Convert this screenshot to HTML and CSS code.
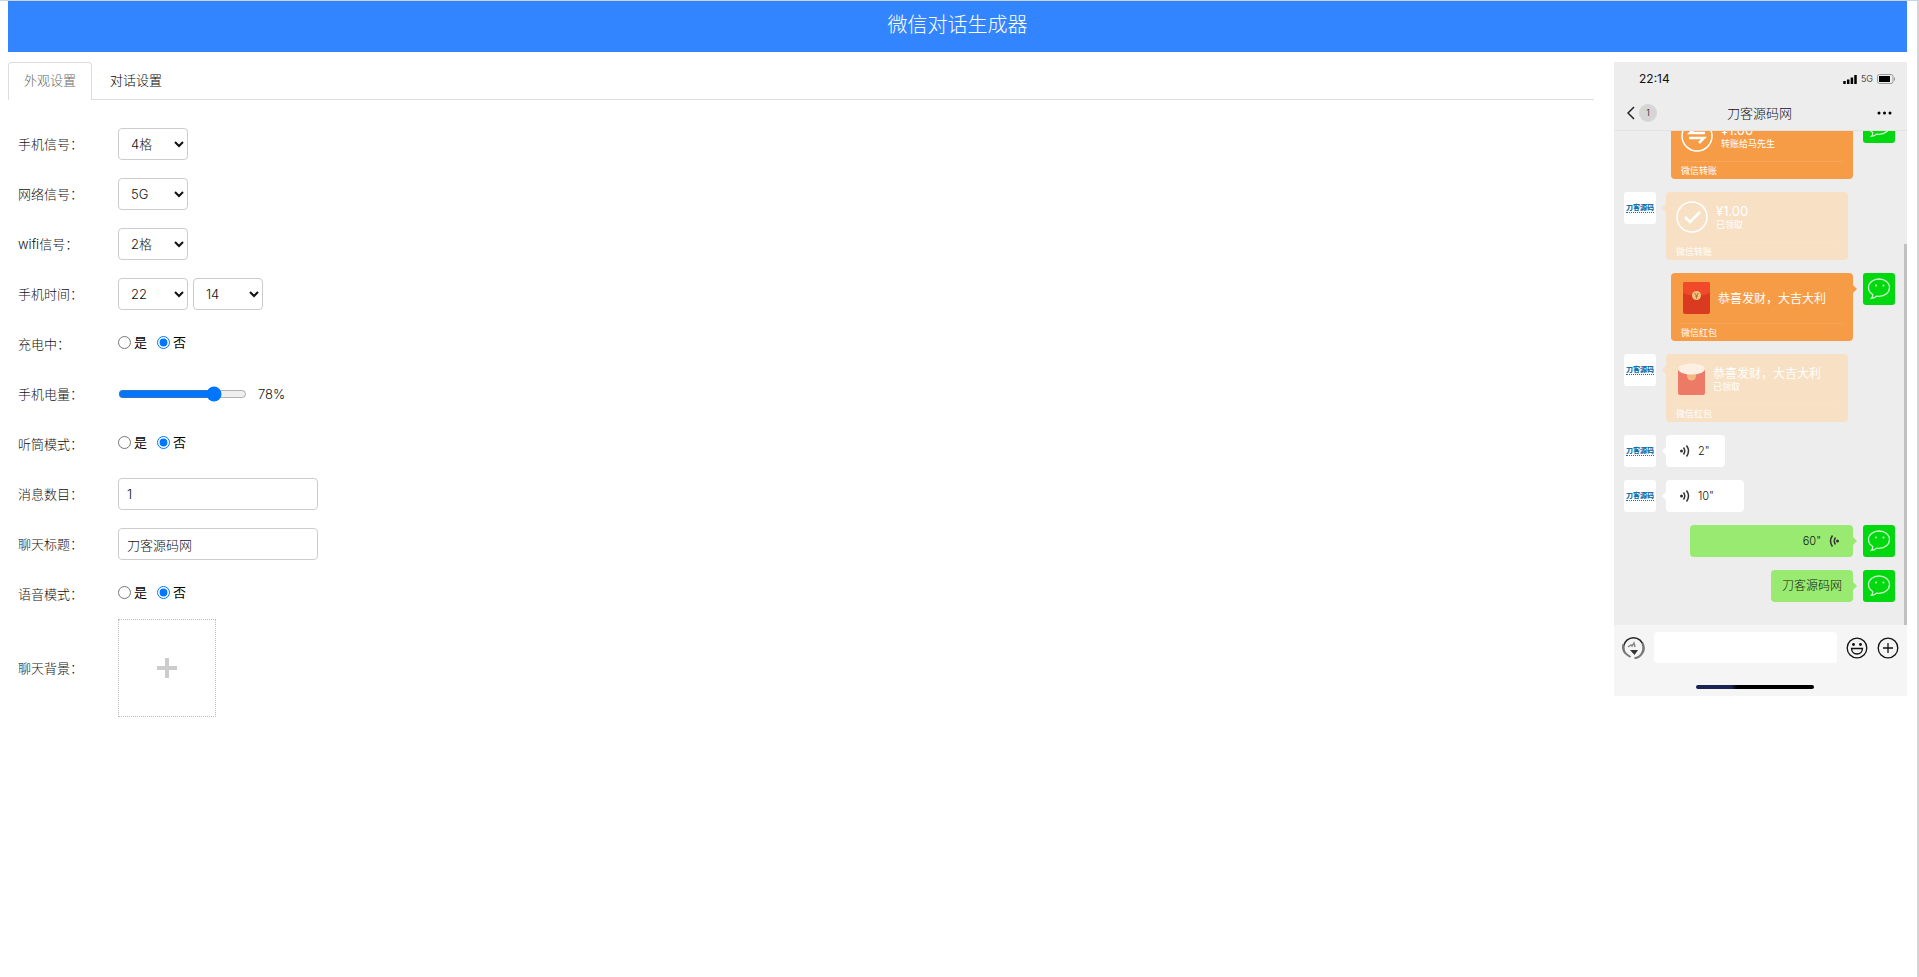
FILE: index.html
```html
<!DOCTYPE html>
<html lang="zh-CN">
<head>
  <meta charset="UTF-8">
  <meta name="viewport" content="width=device-width, initial-scale=1.0">
  <title>微信对话生成器</title>
  <link rel="stylesheet" href="styles.css">
</head>
<body>
  <svg class="symbols" aria-hidden="true">
    <symbol id="icon-wechat" viewBox="0 0 32 32">
      <path d="M16 6C9.900 6 5.500 9.700 5.500 14.600c0 3 1.600 5.400 4.200 6.900.2 1.400-.3 2.800-1.300 3.900 2.100-.2 3.900-1 5.200-2.300.8.100 1.600.2 2.400.2 6.100 0 10.500-3.800 10.500-8.700S22.100 6 16 6z" fill="none" stroke="#cdfccd" stroke-width="1.300"/>
      <circle cx="13" cy="12.500" r="1" fill="#cdfccd"/>
      <circle cx="20.500" cy="12.500" r="1" fill="#cdfccd"/>
    </symbol>
    <symbol id="icon-voice" viewBox="0 0 12 14">
      <circle cx="2.500" cy="7" r="1.500" fill="#333"/>
      <path d="M4.500 3.500q2.500 3.500 0 7M7.500 1.500q4 5.500 0 11" fill="none" stroke="#333" stroke-width="1.500"/>
    </symbol>
  </svg>

  <header class="header">
    <h1>微信对话生成器</h1>
  </header>

  <main class="main">
    <section class="settings">
      <div class="tabs">
        <button type="button" class="tab active">外观设置</button>
        <button type="button" class="tab">对话设置</button>
      </div>

      <form class="form">
        <div class="row">
          <label class="label" for="signal">手机信号：</label>
          <select id="signal" class="control select"><option>4格</option></select>
        </div>
        <div class="row">
          <label class="label" for="network">网络信号：</label>
          <select id="network" class="control select"><option>5G</option></select>
        </div>
        <div class="row">
          <label class="label" for="wifi">wifi信号：</label>
          <select id="wifi" class="control select"><option>2格</option></select>
        </div>
        <div class="row">
          <label class="label" for="hour">手机时间：</label>
          <div class="time">
            <select id="hour" class="control select"><option>22</option></select>
            <select class="control select" aria-label="分钟"><option>14</option></select>
          </div>
        </div>
        <div class="row">
          <span class="label">充电中：</span>
          <div class="radios">
            <label><input type="radio" name="charging">是</label>
            <label><input type="radio" name="charging" checked>否</label>
          </div>
        </div>
        <div class="row">
          <label class="label" for="battery">手机电量：</label>
          <input type="range" id="battery" class="range" min="0" max="100" value="78">
          <output for="battery">78%</output>
        </div>
        <div class="row">
          <span class="label">听筒模式：</span>
          <div class="radios">
            <label><input type="radio" name="earpiece">是</label>
            <label><input type="radio" name="earpiece" checked>否</label>
          </div>
        </div>
        <div class="row">
          <label class="label" for="count">消息数目：</label>
          <input type="text" id="count" class="control text" value="1">
        </div>
        <div class="row">
          <label class="label" for="title">聊天标题：</label>
          <input type="text" id="title" class="control text" value="刀客源码网">
        </div>
        <div class="row">
          <span class="label">语音模式：</span>
          <div class="radios">
            <label><input type="radio" name="voice">是</label>
            <label><input type="radio" name="voice" checked>否</label>
          </div>
        </div>
        <div class="row row-upload">
          <span class="label">聊天背景：</span>
          <button type="button" class="upload" aria-label="上传背景">
            <svg width="20" height="20" viewBox="0 0 20 20"><path d="M10 0v20M0 10h20" stroke="#ccc" stroke-width="4"/></svg>
          </button>
        </div>
      </form>
    </section>

    <aside class="phone">
      <div class="phone-top">
        <div class="status">
          <span class="clock">22:14</span>
          <span class="status-icons">
            <svg width="14" height="9" viewBox="0 0 14 9"><path d="M1.500 6v3M5.200 4.500V9M8.900 2.500V9M12.500 0v9" stroke="#000" stroke-width="2.500"/></svg>
            <span>5G</span>
            <svg width="19" height="10" viewBox="0 0 19 10">
              <rect x=".5" y=".5" width="15.500" height="9" rx="2" fill="none" stroke="#999"/>
              <rect x="2" y="2" width="11" height="6" fill="#000"/>
              <path d="M17.500 3.500v3" stroke="#999"/>
            </svg>
          </span>
        </div>
        <div class="nav">
          <button type="button" class="back" aria-label="返回">
            <svg width="8" height="14" viewBox="0 0 8 14"><path d="M7 1L1 7l6 6" fill="none" stroke="#222" stroke-width="1.500"/></svg>
            <span class="badge">1</span>
          </button>
          <h2>刀客源码网</h2>
          <button type="button" class="more" aria-label="更多">
            <svg width="15" height="4" viewBox="0 0 15 4"><circle cx="2" cy="2" r="1.500"/><circle cx="7.500" cy="2" r="1.500"/><circle cx="13" cy="2" r="1.500"/></svg>
          </button>
        </div>
      </div>

      <div class="chat">
        <div class="msg me">
          <div class="card">
            <div class="card-body">
              <svg width="32" height="32" viewBox="0 0 32 32" fill="none" stroke="#fff">
                <circle cx="16" cy="16" r="15" stroke-width="1.500"/>
                <path d="M24 13H9l5-5M8 18h15l-5 5" stroke-width="2.500"/>
              </svg>
              <div class="card-text"><strong>¥1.00</strong><small>转账给马先生</small></div>
            </div>
            <div class="card-foot">微信转账</div>
          </div>
          <span class="avatar wechat"><svg width="32" height="32"><use href="#icon-wechat"/></svg></span>
        </div>

        <div class="msg">
          <span class="avatar"><b>刀客源码</b><i></i></span>
          <div class="card received">
            <div class="card-body">
              <svg width="32" height="32" viewBox="0 0 32 32" fill="none" stroke="#fff">
                <circle cx="16" cy="16" r="15" stroke-width="1.500"/>
                <path d="M9 16l5 5 10-10" stroke-width="2.500"/>
              </svg>
              <div class="card-text"><strong>¥1.00</strong><small>已领取</small></div>
            </div>
            <div class="card-foot">微信转账</div>
          </div>
        </div>

        <div class="msg me">
          <div class="card packet">
            <div class="card-body">
              <svg width="27" height="32" viewBox="0 0 27 32">
                <rect width="27" height="32" rx="2" fill="#d93a20"/>
                <path d="M0 11V2q0-2 2-2h23q2 0 2 2v9q-13.500 6-27 0z" fill="#f14a2b"/>
                <circle cx="13.500" cy="13.500" r="4.500" fill="#f0c27b"/>
                <path d="M11.500 11l2 2.500 2-2.500M13.500 13.500v3M12 14h3" fill="none" stroke="#b5702c"/>
              </svg>
              <div class="card-text"><span>恭喜发财，大吉大利</span></div>
            </div>
            <div class="card-foot">微信红包</div>
          </div>
          <span class="avatar wechat"><svg width="32" height="32"><use href="#icon-wechat"/></svg></span>
        </div>

        <div class="msg">
          <span class="avatar"><b>刀客源码</b><i></i></span>
          <div class="card packet received">
            <div class="card-body">
              <svg width="27" height="32" viewBox="0 0 27 32">
                <rect y="5" width="27" height="27" rx="2" fill="#ec7a66"/>
                <circle cx="13.500" cy="13" r="4.500" fill="#f2b981"/>
                <ellipse cx="13.500" cy="6" rx="13.500" ry="5.500" fill="#fdf0e2"/>
              </svg>
              <div class="card-text"><span>恭喜发财，大吉大利</span><small>已领取</small></div>
            </div>
            <div class="card-foot">微信红包</div>
          </div>
        </div>

        <div class="msg">
          <span class="avatar"><b>刀客源码</b><i></i></span>
          <div class="bubble voice voice-short"><svg width="12" height="14"><use href="#icon-voice"/></svg>2"</div>
        </div>
        <div class="msg">
          <span class="avatar"><b>刀客源码</b><i></i></span>
          <div class="bubble voice voice-medium"><svg width="12" height="14"><use href="#icon-voice"/></svg>10"</div>
        </div>
        <div class="msg me">
          <div class="bubble voice voice-long">60"<svg class="flip" width="12" height="14"><use href="#icon-voice"/></svg></div>
          <span class="avatar wechat"><svg width="32" height="32"><use href="#icon-wechat"/></svg></span>
        </div>
        <div class="msg me">
          <div class="bubble">刀客源码网</div>
          <span class="avatar wechat"><svg width="32" height="32"><use href="#icon-wechat"/></svg></span>
        </div>
        <span class="scrollbar"></span>
      </div>

      <div class="phone-bottom">
        <div class="inputbar">
          <button type="button" aria-label="语音">
            <svg width="23" height="23" viewBox="0 0 23 23" fill="none" stroke="#222">
              <path d="M3 17A10 10 0 1 1 20 17" stroke-width="1.500"/>
              <path d="M1.500 8q-2 7 4 11l3 2M20.500 7q4 8-4 14l-4 1.500" stroke="#777" stroke-width="2"/>
              <path d="M6 11l3-2 1 1 2-3 1 4" stroke="#888" stroke-width="1.500"/>
              <path d="M8 14h8l-3.500 5z" fill="#333" stroke="none"/>
            </svg>
          </button>
          <input type="text" aria-label="消息">
          <button type="button" aria-label="表情">
            <svg width="22" height="22" viewBox="0 0 22 22" fill="none" stroke="#111" stroke-width="1.300">
              <circle cx="11" cy="11" r="9.800"/>
              <circle cx="7.500" cy="7.500" r=".8" fill="#111"/>
              <circle cx="14.500" cy="7.500" r=".8" fill="#111"/>
              <path d="M5.500 11.500h11q-.5 5.500-5.500 5.500t-5.500-5.500z"/>
            </svg>
          </button>
          <button type="button" aria-label="添加">
            <svg width="22" height="22" viewBox="0 0 22 22" fill="none" stroke="#111" stroke-width="1.300">
              <circle cx="11" cy="11" r="9.800"/>
              <path d="M11 6v10M6 11h10"/>
            </svg>
          </button>
        </div>
        <span class="home"></span>
      </div>
    </aside>
  </main>
</body>
</html>
```
FILE: styles.css
```css
* {
  box-sizing: border-box;
}

body {
  margin: 0;
  min-height: 100vh;
  padding: 0 10px 0 8px;
  border-top: 1px solid #c9d3e6;
  border-right: 2px solid #d5d5d5;
  background: #fff;
  color: #111;
  font-family: Inter, "Noto Sans CJK SC", sans-serif;
  font-size: 13px;
  font-weight: 300;
  line-height: 20px;
}

button,
input,
select {
  font: inherit;
  color: inherit;
}

button {
  padding: 0;
  border: 0;
  background: none;
  cursor: pointer;
}

svg {
  display: block;
  flex: none;
}

.symbols {
  position: absolute;
  width: 0;
  height: 0;
}

.header {
  padding: 10px 0 12px;
  background: #3385ff;
  color: #fff;
  text-align: center;
}

.header h1 {
  margin: 0;
  font-size: 20px;
  font-weight: 300;
  line-height: 29px;
}

.main {
  display: flex;
  align-items: flex-start;
  gap: 20px;
  padding-top: 10px;
}

/* settings */
.settings {
  flex: 1;
}

.tabs {
  display: flex;
  gap: 2px;
  border-bottom: 1px solid #ddd;
}

.tab {
  height: 37px;
  padding: 0 15px 2px;
  border: 1px solid transparent;
  border-bottom: 0;
  border-radius: 4px 4px 0 0;
  color: #000;
}

.tab.active {
  margin-bottom: -1px;
  height: 38px;
  padding-bottom: 3px;
  border-color: #ddd;
  background: #fff;
  color: #666;
}

.form {
  padding: 19px 10px;
}

.row {
  display: flex;
  align-items: center;
  min-height: 50px;
}

.row-upload {
  min-height: 98px;
}

.label {
  width: 100px;
}

.control {
  height: 32px;
  border: 1px solid #ccc;
  border-radius: 4px;
  background: #fff;
}

.select {
  width: 70px;
  padding: 0 0 0 8px;
}

.time {
  display: flex;
  gap: 5px;
}

.text {
  width: 200px;
  padding: 0 8px;
}

.radios {
  display: flex;
  gap: 10px;
  padding-bottom: 4px;
  color: #000;
  font-weight: 400;
}

.radios label {
  display: flex;
  align-items: center;
  gap: 3px;
}

.radios input {
  width: 13px;
  height: 13px;
  margin: 0;
}

.range {
  width: 129px;
  margin: 0 11px 0 0;
}

.upload {
  display: grid;
  place-items: center;
  width: 98px;
  height: 98px;
  border: 1px dotted #bbb;
}

/* phone preview */
.phone {
  width: 293px;
  background: #ededed;
}

.phone-top {
  border-bottom: 1px solid #e2e2e2;
}

.status {
  display: flex;
  align-items: center;
  justify-content: space-between;
  height: 34px;
  padding: 0 11px 0 25px;
}

.clock {
  font-size: 12px;
  font-weight: 400;
}

.status-icons {
  display: flex;
  align-items: center;
  gap: 4px;
  font-size: 9px;
}

.nav {
  display: grid;
  grid-template-columns: 1fr auto 1fr;
  align-items: center;
  height: 34px;
  padding: 0 15px 0 13px;
}

.nav h2 {
  margin: 0;
  font-size: 13px;
  font-weight: 300;
}

.back {
  display: flex;
  align-items: center;
  gap: 4px;
}

.badge {
  width: 18px;
  height: 18px;
  border-radius: 50%;
  background: #d5d5d5;
  font-size: 9px;
  line-height: 18px;
  text-align: center;
}

.more {
  justify-self: end;
}

.chat {
  position: relative;
  display: flex;
  flex-direction: column;
  justify-content: flex-end;
  gap: 13px;
  height: 494px;
  padding: 0 12px 23px 10px;
  overflow: hidden;
}

.scrollbar {
  position: absolute;
  right: 0;
  bottom: 0;
  width: 3px;
  height: 381px;
  background: #c1c1c1;
}

.msg {
  display: flex;
  align-items: flex-start;
  gap: 10px;
}

.msg.me {
  justify-content: flex-end;
}

.avatar {
  display: flex;
  flex: none;
  flex-direction: column;
  align-items: center;
  justify-content: center;
  width: 32px;
  height: 32px;
  border-radius: 3px;
  background: #fff;
  color: #1272b0;
  font-size: 7px;
  line-height: 9px;
}

.avatar b {
  font-weight: 900;
}

.avatar i {
  width: 28px;
  border-top: 1px dotted #1272b0;
}

.avatar.wechat {
  background: #02d80f;
}

.card,
.bubble {
  --bg: #fff;
  position: relative;
  border-radius: 4px;
  background: var(--bg);
}

/* little arrow beside the avatar */
.card::before,
.bubble::before {
  content: '';
  position: absolute;
  top: 12px;
  right: 100%;
  border: 4px solid transparent;
  border-left-width: 0;
  border-right-color: var(--bg);
}

.me .card::before,
.me .bubble::before {
  right: auto;
  left: 100%;
  border-width: 4px 0 4px 4px;
  border-left-color: var(--bg);
}

.card {
  --bg: #f79c46;
  width: 182px;
  height: 68px;
  padding: 9px 10px 0;
  color: #fff;
}

.card.received {
  --bg: #f8e0c4;
}

.card-body {
  display: flex;
  align-items: center;
  gap: 8px;
  height: 32px;
}

.packet .card-body {
  padding-left: 2px;
}

.card-text {
  display: flex;
  flex-direction: column;
  font-size: 12px;
  font-weight: 400;
  line-height: 15px;
}

.card-text strong {
  font-size: 13px;
  font-weight: 400;
}

.card-text small {
  font-size: 9px;
  line-height: 12px;
}

.card-foot {
  margin-top: 9px;
  border-top: 1px solid rgba(255, 255, 255, 0.1);
  font-size: 9px;
  font-weight: 400;
  line-height: 18px;
}

.bubble {
  height: 32px;
  padding: 0 11px;
  font-size: 12px;
  line-height: 32px;
}

.me .bubble {
  --bg: #98eb70;
}

.bubble.voice {
  display: flex;
  align-items: center;
  gap: 7px;
  padding: 0 13px;
  font-size: 11px;
}

.voice-short {
  width: 59px;
}

.voice-medium {
  width: 78px;
}

.voice-long {
  justify-content: flex-end;
  width: 163px;
}

.flip {
  transform: scaleX(-1);
}

.phone-bottom {
  height: 71px;
  padding: 7px 8px 0;
  background: #f5f5f5;
}

.inputbar {
  display: flex;
  align-items: center;
  gap: 9px;
}

.inputbar input {
  flex: 1;
  min-width: 0;
  height: 31px;
  border: 0;
  border-radius: 4px;
  background: #fff;
}

.home {
  display: block;
  width: 118px;
  height: 4px;
  margin: 22px 0 0 74px;
  border-radius: 2px;
  background: linear-gradient(90deg, #1b2350 30%, #000 35%);
}
```
